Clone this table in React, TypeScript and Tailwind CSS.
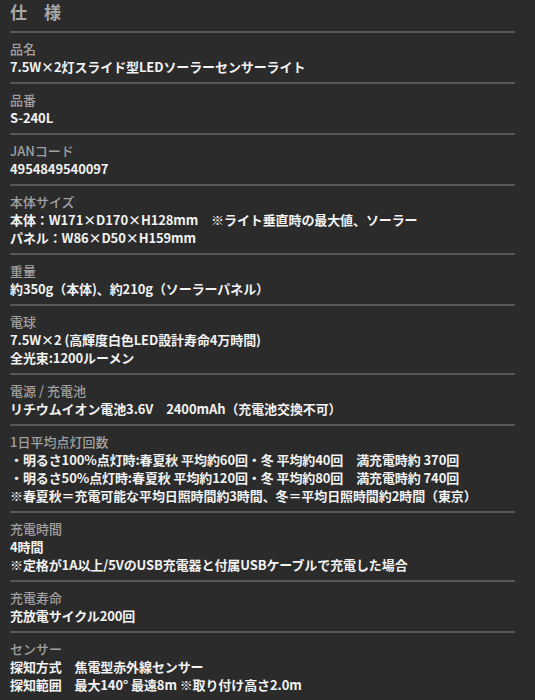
import React from 'react';

type Spec = { label: string; lines: string[] };

const specs: Spec[] = [
  { label: '品名', lines: ['7.5W×2灯スライド型LEDソーラーセンサーライト'] },
  { label: '品番', lines: ['S-240L'] },
  { label: 'JANコード', lines: ['4954849540097'] },
  {
    label: '本体サイズ',
    lines: ['本体：W171×D170×H128mm　※ライト垂直時の最大値、ソーラー', 'パネル：W86×D50×H159mm'],
  },
  { label: '重量', lines: ['約350g（本体)、約210g（ソーラーパネル）'] },
  { label: '電球', lines: ['7.5W×2 (高輝度白色LED設計寿命4万時間)', '全光束:1200ルーメン'] },
  { label: '電源 / 充電池', lines: ['リチウムイオン電池3.6V　2400mAh（充電池交換不可）'] },
  {
    label: '1日平均点灯回数',
    lines: [
      '・明るさ100%点灯時:春夏秋 平均約60回・冬 平均約40回　満充電時約 370回',
      '・明るさ50%点灯時:春夏秋 平均約120回・冬 平均約80回　満充電時約 740回',
      '※春夏秋＝充電可能な平均日照時間約3時間、冬＝平均日照時間約2時間（東京）',
    ],
  },
  { label: '充電時間', lines: ['4時間', '※定格が1A以上/5VのUSB充電器と付属USBケーブルで充電した場合'] },
  { label: '充電寿命', lines: ['充放電サイクル200回'] },
  { label: 'センサー', lines: ['探知方式　焦電型赤外線センサー', '探知範囲　最大140° 最遠8m ※取り付け高さ2.0m'] },
];

const App: React.FC = () => {
  return (
    <div
      className="min-h-screen bg-[#2b2b2b] pl-[10px] pr-[20px]"
      style={{ fontFamily: '"Noto Sans CJK JP", "Noto Sans", sans-serif' }}
    >
      <div className="pt-[2px] h-[33px] border-b-2 border-[#575757]">
        <h2 className="text-[17px] leading-[20px] font-bold text-[#a8a8a8]">仕　様</h2>
      </div>
      {specs.map(spec => (
        <div key={spec.label} className="pt-[7px] pb-[6px] border-b-2 border-[#575757]">
          <div className="text-[13px] leading-[18px] font-medium text-[#a0a0a0]">{spec.label}</div>
          {spec.lines.map((line, i) => (
            <div key={i} className="text-[13px] leading-[18px] font-bold text-[#f2f2f2] whitespace-pre tracking-[-0.1px]">
              {line}
            </div>
          ))}
        </div>
      ))}
    </div>
  );
};

export default App;
